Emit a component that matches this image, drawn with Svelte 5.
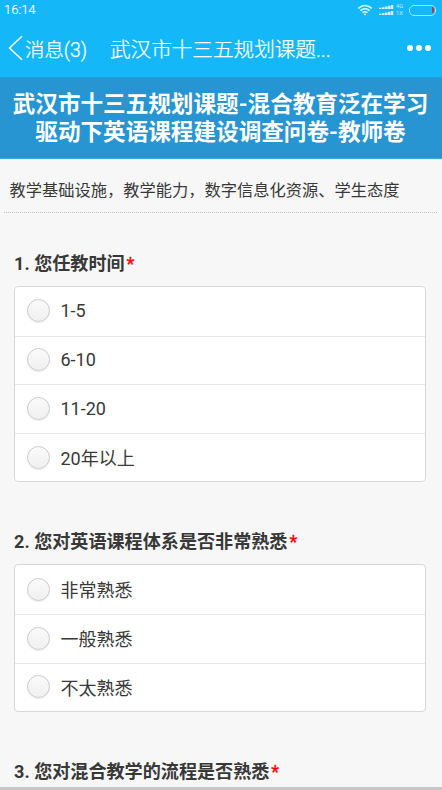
<script>
  const questions = [
    { title: '您任教时间', options: ['1-5', '6-10', '11-20', '20年以上'] },
    { title: '您对英语课程体系是否非常熟悉', options: ['非常熟悉', '一般熟悉', '不太熟悉'] },
    { title: '您对混合教学的流程是否熟悉', options: [] }
  ];
</script>

<div class="screen">
  <header>
    <div class="status">
      <span class="time">16:14</span>
      <svg class="wifi" width="16" height="12" viewBox="0 0 16 12" fill="none" stroke="#e6f8ff" stroke-width="1.5">
        <path d="M1.2 4.4Q8-1.4 14.8 4.4M3.4 6.6Q8 2.8 12.6 6.6M5.5 8.7Q8 6.8 10.5 8.7" />
        <circle cx="8" cy="10.4" r="0.6" fill="#e6f8ff" stroke-width="0.8" />
      </svg>
      <svg class="signal" width="15" height="12" viewBox="0 0 15 12" fill="#d5f2ff">
        {#each [0, 6] as y}
          <path d="M0 {y + 3.7}h2.6v1.3H0zM3 {y + 3.2}h2.6v1.8H3zM6 {y + 2.5}h2.6V{y + 5}H6zM9 {y + 1.8}h2.6V{y + 5}H9zM12 {y + 1}h2.2v4H12z" />
        {/each}
      </svg>
      <span class="net"><span>4G</span><span>1X</span></span>
      <span class="battery"><i></i></span>
    </div>
    <nav>
      <svg class="back" width="15" height="26" viewBox="0 0 15 26" fill="none" stroke="#fff" stroke-width="1.5">
        <path d="M14 1.2L1.5 13L14 24.8" />
      </svg>
      <span class="messages">消息(3)</span>
      <span class="page">武汉市十三五规划课题...</span>
      <span class="more"><i></i><i></i><i></i></span>
    </nav>
  </header>

  <h1>武汉市十三五规划课题-混合教育泛在学习<br />驱动下英语课程建设调查问卷-教师卷</h1>
  <p class="intro">教学基础设施，教学能力，数字信息化资源、学生态度</p>

  {#each questions as q, n}
    <section>
      <h2>{n + 1}. {q.title}<b>*</b></h2>
      {#if q.options.length}
        <div class="card">
          {#each q.options as option}
            <label><span class="radio"></span><span class="text">{option}</span></label>
          {/each}
        </div>
      {/if}
    </section>
  {/each}
  <div class="edge"></div>
</div>

<style>
  .screen {
    position: relative;
    width: 442px;
    height: 790px;
    overflow: hidden;
    background: #f7f7f7;
    color: #383838;
    font-family: Roboto, "Noto Sans CJK SC", sans-serif;
    white-space: nowrap;
  }
  header {
    height: 77px;
    background: #14b7f7;
    color: #fff;
  }
  .status {
    display: flex;
    align-items: center;
    height: 20px;
    padding: 0 6px 0 4px;
  }
  .time {
    flex: 1;
    font-size: 13px;
    font-weight: 300;
    line-height: 20px;
    -webkit-text-stroke: 0.15px #fff;
  }
  .wifi { margin-right: 6px; }
  .signal { margin-right: 2px; }
  .net {
    display: flex;
    flex-direction: column;
    width: 9px;
    margin-right: 4px;
    color: #c0ebfc;
    font-size: 5.8px;
    line-height: 7px;
  }
  .battery {
    display: flex;
    justify-content: flex-end;
    align-items: center;
    box-sizing: border-box;
    width: 27px;
    height: 11px;
    padding-right: 1px;
    border: 1px solid #a8e3fb;
    border-radius: 5px;
  }
  .battery i {
    width: 2px;
    height: 6px;
    border-radius: 0 2px 2px 0;
    background: #bd3040;
  }
  nav {
    display: flex;
    align-items: center;
    height: 56px;
    padding: 0 11px 0 8px;
    font-weight: 300;
    -webkit-text-stroke: 0.25px #fff;
  }
  .messages {
    width: 85px;
    margin-left: 2px;
    font-size: 19.4px;
  }
  .page {
    flex: 1;
    font-size: 20.6px;
  }
  .more {
    display: flex;
    gap: 3px;
  }
  .more i {
    width: 6px;
    height: 6px;
    border-radius: 50%;
    background: #fff;
  }
  h1 {
    box-sizing: border-box;
    height: 82px;
    margin: 0;
    padding: 13px 1px 0 0;
    border-top: 1px solid #1d9fde;
    border-bottom: 1px solid #35abe0;
    background: #2795d1;
    color: #fff;
    font-size: 22.6px;
    font-weight: 700;
    line-height: 27.5px;
    text-align: center;
  }
  .intro {
    box-sizing: border-box;
    height: 54px;
    margin: 0 5px 0 4px;
    padding: 20px 0 0 5.5px;
    border-bottom: 1px dotted #c4c4c4;
    font-size: 16.25px;
    line-height: 24px;
  }
  section {
    padding: 37px 16px 0 14px;
  }
  section + section {
    padding-top: 46px;
  }
  h2 {
    height: 28px;
    margin: 0 0 8px;
    font-size: 18.1px;
    font-weight: 700;
    line-height: 28px;
  }
  h2 b {
    margin-left: 2px;
    color: #f00;
    font-weight: 400;
    -webkit-text-stroke: 0.3px #f00;
  }
  .card {
    box-sizing: border-box;
    overflow: hidden;
    border: 1px solid #d8d8d8;
    border-radius: 4px;
    background: #fff;
  }
  label {
    display: flex;
    align-items: center;
    box-sizing: border-box;
    height: 48.6px;
    padding: 0 0 1px 12px;
    font-size: 18px;
  }
  label + label {
    border-top: 1px solid #e8e8e8;
  }
  .radio {
    box-sizing: border-box;
    width: 23px;
    height: 23px;
    margin-right: 10.5px;
    border: 1px solid #c9cccc;
    border-radius: 50%;
    background: linear-gradient(#fafafa, #f0f0f0);
    box-shadow: 0 1px 1px #eee;
  }
  .edge {
    position: absolute;
    bottom: 0;
    left: 0;
    width: 100%;
    height: 3px;
    background: #c8c8c8;
  }
</style>
